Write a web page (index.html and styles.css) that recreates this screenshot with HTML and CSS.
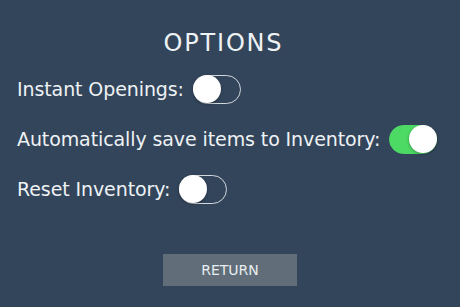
FILE: index.html
```html
<!DOCTYPE html>
<html>
<head>
<meta charset="utf-8">
<link rel="stylesheet" href="styles.css">
</head>
<body>
<div class="page">
  <h1 class="title">OPTIONS</h1>
  <div class="rows">
    <div class="row">
      <span class="label">Instant Openings:</span>
      <span class="toggle"><span class="knob"></span></span>
    </div>
    <div class="row">
      <span class="label">Automatically save items to Inventory:</span>
      <span class="toggle on"><span class="knob"></span></span>
    </div>
    <div class="row">
      <span class="label">Reset Inventory:</span>
      <span class="toggle"><span class="knob"></span></span>
    </div>
  </div>
  <div class="actions">
    <button class="return">RETURN</button>
  </div>
</div>
</body>
</html>
```
FILE: styles.css
```css
html, body {
  margin: 0;
  padding: 0;
  background: #33455a;
}
.page {
  width: 460px;
  height: 307px;
  box-sizing: border-box;
  padding-top: 28px;
  font-family: "DejaVu Sans", "Liberation Sans", sans-serif;
  color: #eef2f5;
  display: flex;
  flex-direction: column;
}
.title {
  margin: 0;
  padding-right: 13px;
  font-size: 24px;
  line-height: 30px;
  font-weight: normal;
  letter-spacing: 1.8px;
  text-align: center;
}
.rows {
  margin-top: 16px;
  padding-left: 17px;
  display: flex;
  flex-direction: column;
  gap: 20px;
}
.row {
  display: flex;
  align-items: center;
  height: 30px;
  gap: 9px;
}
.label {
  font-size: 19px;
  line-height: 30px;
  letter-spacing: -0.1px;
}
.toggle {
  position: relative;
  width: 48px;
  height: 29px;
  box-sizing: border-box;
  border: 1.5px solid #d3d8de;
  border-radius: 15px;
  background: transparent;
}
.knob {
  position: absolute;
  left: -1px;
  top: -1px;
  width: 28px;
  height: 28px;
  border-radius: 50%;
  background: #ffffff;
  box-shadow: 0 1px 3px rgba(0, 0, 0, 0.35);
}
.toggle.on {
  background: #4cd964;
  border-color: #4cd964;
}
.toggle.on .knob {
  left: auto;
  right: -1px;
}
.actions {
  margin-top: 50px;
  display: flex;
  justify-content: center;
}
.return {
  width: 134px;
  height: 32px;
  border: none;
  background: #616d78;
  color: #e8edf0;
  font-family: "DejaVu Sans", "Liberation Sans", sans-serif;
  font-size: 14px;
  padding: 0;
}
```
